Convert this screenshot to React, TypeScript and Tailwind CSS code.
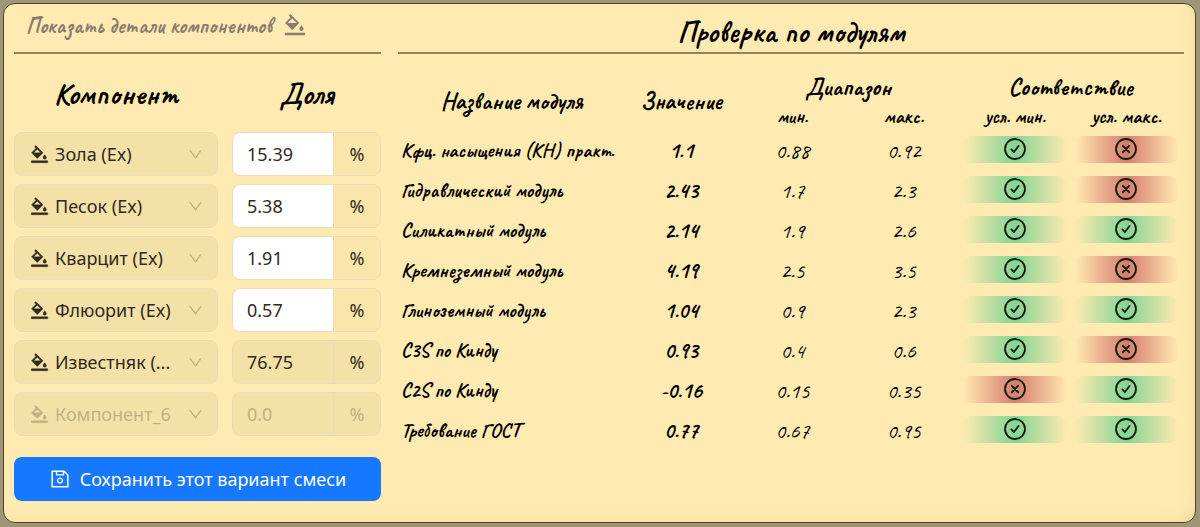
import { useState } from 'react';
import { AiOutlineBgColors, AiOutlineDown, AiOutlineSave } from 'react-icons/ai';

type Component = { name: string; share: string; state: 'edit' | 'rest' | 'empty' };

type ModuleRow = {
  name: string;
  value: string;
  min: string;
  max: string;
  minOk: boolean;
  maxOk: boolean;
};

const COMPONENTS: Component[] = [
  { name: 'Зола (Ex)', share: '15.39', state: 'edit' },
  { name: 'Песок (Ex)', share: '5.38', state: 'edit' },
  { name: 'Кварцит (Ex)', share: '1.91', state: 'edit' },
  { name: 'Флюорит (Ex)', share: '0.57', state: 'edit' },
  { name: 'Известняк (...', share: '76.75', state: 'rest' },
  { name: 'Компонент_6', share: '0.0', state: 'empty' },
];

const MODULES: ModuleRow[] = [
  { name: 'Кфц. насыщения (КН) практ.', value: '1.1', min: '0.88', max: '0.92', minOk: true, maxOk: false },
  { name: 'Гидравлический модуль', value: '2.43', min: '1.7', max: '2.3', minOk: true, maxOk: false },
  { name: 'Силикатный модуль', value: '2.14', min: '1.9', max: '2.6', minOk: true, maxOk: true },
  { name: 'Кремнеземный модуль', value: '4.19', min: '2.5', max: '3.5', minOk: true, maxOk: false },
  { name: 'Глиноземный модуль', value: '1.04', min: '0.9', max: '2.3', minOk: true, maxOk: true },
  { name: 'C3S по Кинду', value: '0.93', min: '0.4', max: '0.6', minOk: true, maxOk: false },
  { name: 'C2S по Кинду', value: '-0.16', min: '0.15', max: '0.35', minOk: false, maxOk: true },
  { name: 'Требование ГОСТ', value: '0.77', min: '0.67', max: '0.95', minOk: true, maxOk: true },
];

function StatusBadge({ ok }: { ok: boolean }) {
  return (
    <div
      className={`flex h-[27px] justify-center rounded-lg bg-linear-to-r from-transparent to-transparent ${
        ok ? 'via-[#85d495]' : 'via-[#d67d70]'
      }`}
    >
      <svg
        className="h-[26px] w-[26px]"
        viewBox="0 0 24 24"
        fill="none"
        stroke="#14200f"
        strokeWidth={1.7}
        strokeLinecap="round"
        strokeLinejoin="round"
        role="img"
        aria-label={ok ? 'Да' : 'Нет'}
      >
        <circle cx="12" cy="12" r="9.2" />
        {ok ? <path d="M8.7 12.4 11 14.8 15.3 9.2" /> : <path d="m9 9 6 6m0-6-6 6" />}
      </svg>
    </div>
  );
}

function ComponentRow({ item, index }: { item: Component; index: number }) {
  const [share, setShare] = useState(item.share);
  const color = item.state === 'empty' ? 'text-[#c0b184]' : 'text-[#30291c]';

  return (
    <div className="grid grid-cols-[204fr_149fr] gap-[14px]">
      <div className={`relative flex h-11 items-center ${color}`}>
        <AiOutlineBgColors
          className="pointer-events-none absolute left-[15px] h-[21px] w-[21px]"
          stroke="currentColor"
          strokeWidth={20}
        />
        <select
          aria-label={`Компонент ${index + 1}`}
          className="h-full w-full appearance-none rounded-lg border border-[#e8dcbd] bg-[#f4e1a8] pl-10 pr-9 text-lg"
        >
          <option>{item.name}</option>
        </select>
        <AiOutlineDown className="pointer-events-none absolute right-[14px] h-[17px] w-[17px] text-[#c3b283]" />
      </div>
      <div
        className={`flex h-11 overflow-hidden rounded-lg border border-[#e8dcbd] ${color} ${
          item.state === 'edit' ? 'bg-[#fae5aa]' : 'bg-[#f4e1a8]'
        }`}
      >
        <input
          aria-label={`Доля ${index + 1}`}
          value={share}
          onChange={(e) => setShare(e.target.value)}
          disabled={item.state !== 'edit'}
          className={`w-0 flex-1 border-r border-[#e8dcbd] pl-[14px] text-lg ${
            item.state === 'edit' ? 'bg-white' : 'bg-transparent'
          }`}
        />
        <span className="flex w-[46px] items-center justify-center text-lg">%</span>
      </div>
    </div>
  );
}

export default function App() {
  return (
    <div className="min-h-screen bg-[#9e9677] pt-[3px] pr-1 pb-1 pl-[3px] font-['Noto_Sans',sans-serif] text-black">
      <main className="flex min-h-[520px] gap-[17px] rounded-xl border border-[#4c432d] bg-[#ffeab1] pr-[11px] pl-[10px] shadow-[inset_-8px_-8px_16px_-8px_#eeda9f]">
        <section className="w-[367px] shrink-0">
          <div className="h-[50px] border-b-2 border-[#93825c]">
            <button className="flex items-center gap-[10px] pt-[6px] pl-3 font-['Caveat','Liberation_Serif',serif] text-[22px] font-bold text-[#887d70]">
              Показать детали компонентов
              <AiOutlineBgColors className="mb-1 h-[26px] w-[26px]" />
            </button>
          </div>
          <div className="grid h-[78px] grid-cols-[204fr_149fr] items-center gap-[14px] pt-px text-center font-['Caveat','Liberation_Serif',serif] text-3xl font-bold">
            <h2>Компонент</h2>
            <h2>Доля</h2>
          </div>
          <div className="flex flex-col gap-2">
            {COMPONENTS.map((item, i) => (
              <ComponentRow key={item.name} item={item} index={i} />
            ))}
          </div>
          <button className="mt-[21px] flex h-11 w-full items-center justify-center gap-[9px] rounded-lg bg-[#1677ff] text-lg text-white">
            <AiOutlineSave className="h-[22px] w-[22px]" />
            Сохранить этот вариант смеси
          </button>
        </section>

        <section className="min-w-0 flex-1 font-['Caveat','Liberation_Serif',serif]">
          <h1 className="h-[50px] border-b-2 border-[#93825c] pt-[10px] text-center text-3xl font-bold">
            Проверка по модулям
          </h1>
          <div className="pt-[17px] pr-[2px]">
            <table className="w-full table-fixed text-center">
              <colgroup>
                <col className="w-[29%]" />
                <col />
                <col />
                <col />
                <col />
                <col />
              </colgroup>
              <thead className="text-2xl">
                <tr className="h-8">
                  <th rowSpan={2}>Название модуля</th>
                  <th rowSpan={2}>Значение</th>
                  <th colSpan={2}>Диапазон</th>
                  <th colSpan={2}>Соответствие</th>
                </tr>
                <tr className="h-7 text-xl">
                  <th>мин.</th>
                  <th>макс.</th>
                  <th>усл. мин.</th>
                  <th>усл. макс.</th>
                </tr>
              </thead>
              <tbody>
                {MODULES.map((row) => (
                  <tr key={row.name} className="h-10">
                    <th className="pl-[3px] text-left text-xl font-bold whitespace-nowrap">{row.name}</th>
                    <td className="text-[22px] font-bold">{row.value}</td>
                    <td className="text-[22px]">{row.min}</td>
                    <td className="text-[22px]">{row.max}</td>
                    <td className="px-1 pb-1">
                      <StatusBadge ok={row.minOk} />
                    </td>
                    <td className="px-1 pb-1">
                      <StatusBadge ok={row.maxOk} />
                    </td>
                  </tr>
                ))}
              </tbody>
            </table>
          </div>
        </section>
      </main>
    </div>
  );
}
